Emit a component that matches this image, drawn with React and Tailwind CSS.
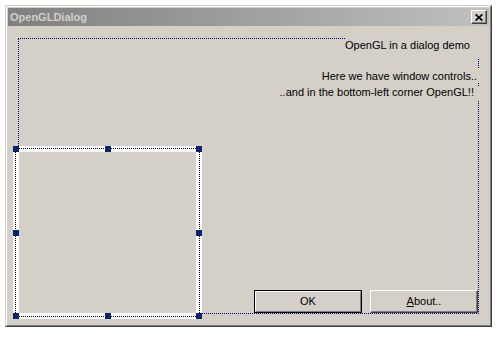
import React from "react";

const face = "font-['Liberation_Sans',Arial,sans-serif]";

// selection grip on the GL view
function Grip({ className }) {
  return <div className={`absolute w-[6px] h-[6px] bg-[#0a246a] ${className}`} />;
}

function GlView() {
  return (
    <div className="relative shrink-0 w-[189px] h-[173px] -ml-[6px] -mb-[6px] bg-white p-[2px]">
      <div className="h-full border border-dotted border-black bg-white p-[3px]">
        <div className="h-full bg-[#d4d0c8]" />
      </div>
      <Grip className="left-0 top-0" />
      <Grip className="left-[92px] top-0" />
      <Grip className="right-0 top-0" />
      <Grip className="left-0 top-[84px]" />
      <Grip className="right-0 top-[84px]" />
      <Grip className="left-0 bottom-0" />
      <Grip className="left-[92px] bottom-0" />
      <Grip className="right-0 bottom-0" />
    </div>
  );
}

function TitleBar() {
  return (
    <div className="flex items-center h-[18px] bg-linear-to-r from-[#808080] to-[#c0c0c0]">
      <span className="flex-1 pl-[2px] text-[11px] leading-[18px] font-bold text-[#d4d0c8]">
        OpenGLDialog
      </span>
      <div className="flex items-center justify-center w-[16px] h-[14px] mr-[2px] bg-[#d4d0c8] border border-t-white border-l-white border-r-[#404040] border-b-[#404040] shadow-[inset_-1px_-1px_0_#808080]">
        <svg width="8" height="7" viewBox="0 0 8 7" className="-ml-[1px]">
          <path d="M0.6 0.4 L7.4 6.6 M7.4 0.4 L0.6 6.6" stroke="#000" strokeWidth="1.7" fill="none" />
        </svg>
      </div>
    </div>
  );
}

export default function App() {
  return (
    <div className={`w-[500px] h-[337px] bg-white pt-[5px] pl-[5px] text-black ${face}`}>
      <div className="flex flex-col w-[487px] h-[322px] bg-[#d4d0c8] border border-t-[#d4d0c8] border-l-[#d4d0c8] border-r-[#404040] border-b-[#404040]">
        <div className="flex flex-col flex-1 p-[1px] border border-t-white border-l-white border-r-[#808080] border-b-[#808080]">
          <TitleBar />
          <div className="flex-1 pt-[12px] pl-[10px]">
            <div className="flex flex-col justify-between w-[461px] h-[276px] border border-dotted border-[#000080]">
              <div className="flex flex-col items-end -mt-[1px] -mr-[1px] text-[11px] whitespace-nowrap">
                <div className="w-[134px] h-[20px] pt-[1px] pr-[16px] bg-[#d4d0c8] text-right leading-[13px]">
                  OpenGL in a dialog demo
                </div>
                <div className="w-[161px] h-[14px] mt-[10px] pt-[2px] pr-[2px] bg-[#d4d0c8] text-right leading-[12px]">
                  Here we have window controls..
                </div>
                <div className="w-[204px] h-[14px] mt-[4px] pr-[5px] bg-[#d4d0c8] text-right leading-[12px]">
                  ..and in the bottom-left corner OpenGL!!
                </div>
              </div>
              <div className="flex items-end">
                <GlView />
                <div className="flex gap-[8px] ml-auto text-[11px]">
                  <button className="w-[108px] h-[23px] border border-black bg-[#d4d0c8]">
                    <div className="flex items-center justify-center h-full border border-t-white border-l-white border-r-[#808080] border-b-[#808080]">
                      OK
                    </div>
                  </button>
                  <button className="flex items-center justify-center w-[108px] h-[23px] bg-[#d4d0c8] border border-t-white border-l-white border-r-[#404040] border-b-[#404040] shadow-[inset_-1px_-1px_0_#808080]">
                    <span>
                      <span className="underline">A</span>bout..
                    </span>
                  </button>
                </div>
              </div>
            </div>
          </div>
        </div>
      </div>
    </div>
  );
}
